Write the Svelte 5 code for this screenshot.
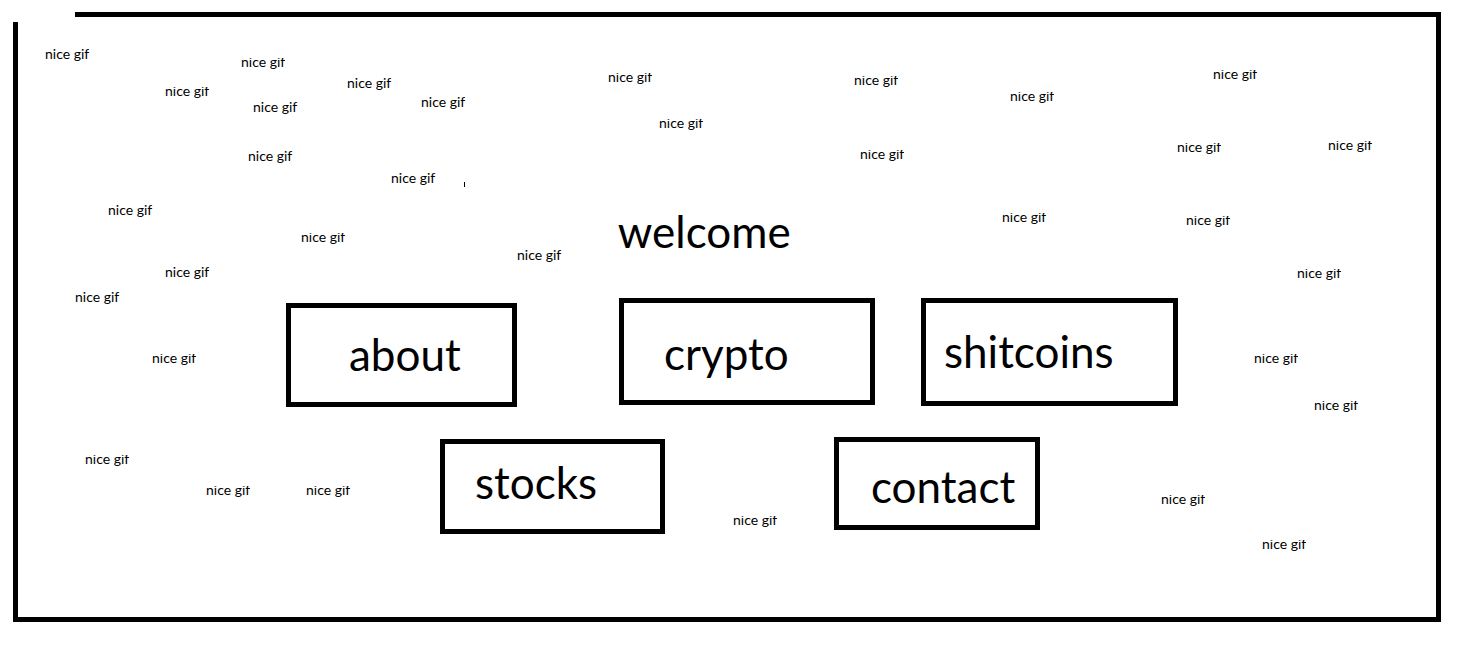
<script lang="ts">
  type Label = { x: number; y: number; trimmed?: boolean };

  // Scattered label positions on a canvas 1467 units wide; y is the middle of the text.
  const canvasWidth = 1467;
  const full: [number, number][] = [
    [45, 54], [347, 83], [253, 107], [421, 102], [248, 156],
    [391, 178], [108, 210], [517, 255], [165, 272], [75, 297],
  ];
  const trimmed: [number, number][] = [
    [241, 62], [165, 91], [608, 77], [659, 123], [854, 80], [860, 154],
    [1010, 96], [1213, 74], [1177, 147], [1328, 145], [1002, 217], [1186, 220],
    [301, 237], [1297, 273], [152, 358], [1254, 358], [1314, 405], [85, 459],
    [206, 490], [306, 490], [733, 520], [1161, 499], [1262, 544],
  ];
  const labels: Label[] = [
    ...full.map(([x, y]) => ({ x, y })),
    ...trimmed.map(([x, y]) => ({ x, y, trimmed: true })),
  ];
</script>

<main class="page">
  <div class="frame">
    <h1>welcome</h1>
    <nav aria-label="Sections">
      <div class="row first">
        <a class="about" href="#about">about</a>
        <a class="crypto" href="#crypto">crypto</a>
        <a class="shitcoins" href="#shitcoins">shitcoins</a>
      </div>
      <div class="row second">
        <a class="stocks" href="#stocks">stocks</a>
        <a class="contact" href="#contact">contact</a>
      </div>
    </nav>
  </div>
  {#each labels as label}
    <span
      class="label"
      class:trimmed={label.trimmed}
      style="left: {(label.x / canvasWidth) * 100}%; top: {label.y}px">nice gif</span>
  {/each}
  <span class="tick"></span>
</main>

<style>
  :global(body) {
    margin: 0;
    background: #fff;
  }
  .page {
    position: relative;
    padding: 12px 26px 26px 13px;
    color: #000;
    font-family: Lato, sans-serif;
  }
  .frame {
    position: relative;
    border: 5px solid #000;
    padding: 184px 0 83px;
  }
  /* Opening in the top left corner of the border */
  .frame::before {
    content: "";
    position: absolute;
    left: -5px;
    top: -5px;
    width: 62px;
    height: 10px;
    background: #fff;
  }
  h1 {
    margin: 0 0 0 42.3%;
    font-size: 44px;
    line-height: 60px;
    font-weight: 400;
  }
  nav {
    padding-top: 37px;
  }
  .row {
    display: grid;
  }
  .first {
    grid-template-columns: 268fr 231fr 102fr 256fr 46fr 257fr 258fr;
    min-height: 109px;
  }
  .second {
    grid-template-columns: 422fr 225fr 169fr 206fr 396fr;
    min-height: 97px;
    padding-top: 30px;
  }
  a {
    box-sizing: border-box;
    border: 5px solid #000;
    color: inherit;
    text-decoration: none;
    font-size: 44px;
    line-height: 60px;
  }
  .about {
    grid-column: 2;
    align-self: end;
    height: 104px;
    padding: 16px 0 0 58px;
  }
  .crypto {
    grid-column: 4;
    height: 107px;
    padding: 20px 0 0 40px;
  }
  .shitcoins {
    grid-column: 6;
    height: 108px;
    padding: 18px 0 0 18px;
  }
  .stocks {
    grid-column: 2;
    align-self: end;
    height: 95px;
    padding: 8px 0 0 30px;
  }
  .contact {
    grid-column: 4;
    height: 93px;
    padding: 14px 0 0 32px;
  }
  .label {
    position: absolute;
    margin-top: -10px;
    font-size: 14px;
    line-height: 20px;
    white-space: nowrap;
  }
  .trimmed {
    clip-path: inset(6px 0 0);
  }
  .tick {
    position: absolute;
    left: 31.63%;
    top: 182px;
    width: 1px;
    height: 5px;
    background: #000;
  }
</style>
